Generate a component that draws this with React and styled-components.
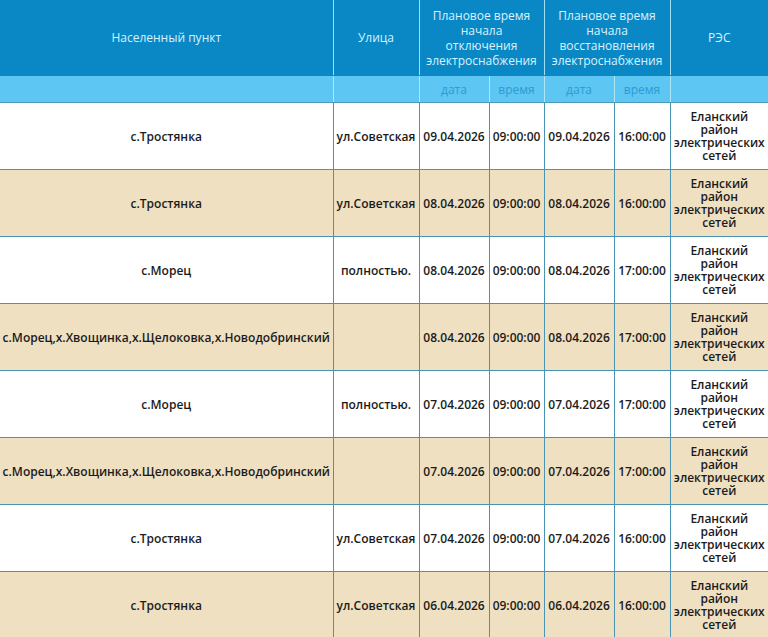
import styled, { createGlobalStyle } from "styled-components";

const GlobalStyle = createGlobalStyle`
  html, body {
    margin: 0;
    padding: 0;
    background: #ffffff;
  }
  body {
    font-family: "Open Sans", "Liberation Sans", sans-serif;
  }
`;

const ROWS = [
  { place: "с.Тростянка", street: "ул.Советская", offDate: "09.04.2026", offTime: "09:00:00", onDate: "09.04.2026", onTime: "16:00:00" },
  { place: "с.Тростянка", street: "ул.Советская", offDate: "08.04.2026", offTime: "09:00:00", onDate: "08.04.2026", onTime: "16:00:00" },
  { place: "с.Морец", street: "полностью.", offDate: "08.04.2026", offTime: "09:00:00", onDate: "08.04.2026", onTime: "17:00:00" },
  { place: "с.Морец,х.Хвощинка,х.Щелоковка,х.Новодобринский", street: "", offDate: "08.04.2026", offTime: "09:00:00", onDate: "08.04.2026", onTime: "17:00:00" },
  { place: "с.Морец", street: "полностью.", offDate: "07.04.2026", offTime: "09:00:00", onDate: "07.04.2026", onTime: "17:00:00" },
  { place: "с.Морец,х.Хвощинка,х.Щелоковка,х.Новодобринский", street: "", offDate: "07.04.2026", offTime: "09:00:00", onDate: "07.04.2026", onTime: "17:00:00" },
  { place: "с.Тростянка", street: "ул.Советская", offDate: "07.04.2026", offTime: "09:00:00", onDate: "07.04.2026", onTime: "16:00:00" },
  { place: "с.Тростянка", street: "ул.Советская", offDate: "06.04.2026", offTime: "09:00:00", onDate: "06.04.2026", onTime: "16:00:00" },
  { place: "с.Морец", street: "полностью.", offDate: "06.04.2026", offTime: "09:00:00", onDate: "06.04.2026", onTime: "17:00:00" },
];

const COLS = [333, 86, 70, 55, 70, 56, 98];

export default function App() {
  return (
    <>
      <GlobalStyle />
      <Table>
        <colgroup>
          {COLS.map((w, i) => (
            <col key={i} style={{ width: w }} />
          ))}
        </colgroup>
        <thead>
          <tr>
            <HeadCell>Населенный пункт</HeadCell>
            <HeadCell>Улица</HeadCell>
            <HeadCell colSpan={2}>
              Плановое время
              <br />
              начала
              <br />
              отключения
              <br />
              электроснабжения
            </HeadCell>
            <HeadCell colSpan={2}>
              Плановое время
              <br />
              начала
              <br />
              восстановления
              <br />
              электроснабжения
            </HeadCell>
            <HeadCell>РЭС</HeadCell>
          </tr>
          <tr>
            <SubCell />
            <SubCell />
            <SubCell>дата</SubCell>
            <SubCell>время</SubCell>
            <SubCell>дата</SubCell>
            <SubCell>время</SubCell>
            <SubCell />
          </tr>
        </thead>
        <tbody>
          {ROWS.map((r, i) => (
            <Row key={i} $shaded={i % 2 === 1}>
              <Cell>{r.place}</Cell>
              <Cell>{r.street}</Cell>
              <Cell>{r.offDate}</Cell>
              <Cell>{r.offTime}</Cell>
              <Cell>{r.onDate}</Cell>
              <Cell>{r.onTime}</Cell>
              <Cell>
                <Stack>Еланский район электрических сетей</Stack>
              </Cell>
            </Row>
          ))}
        </tbody>
      </Table>
    </>
  );
}

const Table = styled.table`
  width: 768px;
  table-layout: fixed;
  border-collapse: collapse;
  border-spacing: 0;
  font-family: "Open Sans", "Liberation Sans", sans-serif;
`;

const HeadCell = styled.th`
  height: 75px;
  padding: 0 2px;
  background: #0a88c6;
  color: #d9f2fc;
  font-size: 12px;
  font-weight: 400;
  line-height: 15px;
  text-align: center;
  vertical-align: middle;
  border-left: 1px solid #9fe0f4;
  border-bottom: 1px solid #0a88c6;
  &:first-child {
    border-left: none;
  }
`;

const SubCell = styled.th`
  height: 26px;
  padding: 0;
  background: #5dc6f2;
  color: #2c9bd2;
  font-size: 12px;
  font-weight: 400;
  text-align: center;
  vertical-align: middle;
  border-left: 1px solid #aee6f6;
  border-bottom: 1px solid #4a9bbb;
  &:first-child {
    border-left: none;
  }
`;

const Row = styled.tr`
  background: ${(p) => (p.$shaded ? "#efe0c2" : "#ffffff")};
`;

const Cell = styled.td`
  height: 66px;
  padding: 0 2px;
  color: #1b1b1b;
  font-size: 12px;
  font-weight: 600;
  line-height: 13px;
  text-align: center;
  vertical-align: middle;
  white-space: nowrap;
  border-left: 1px solid #4a94b3;
  border-bottom: 1px solid #4a94b3;
  &:first-child {
    border-left: none;
  }
  &:last-child {
    white-space: normal;
  }
`;

const Stack = styled.span`
  display: inline-block;
  width: min-content;
`;
